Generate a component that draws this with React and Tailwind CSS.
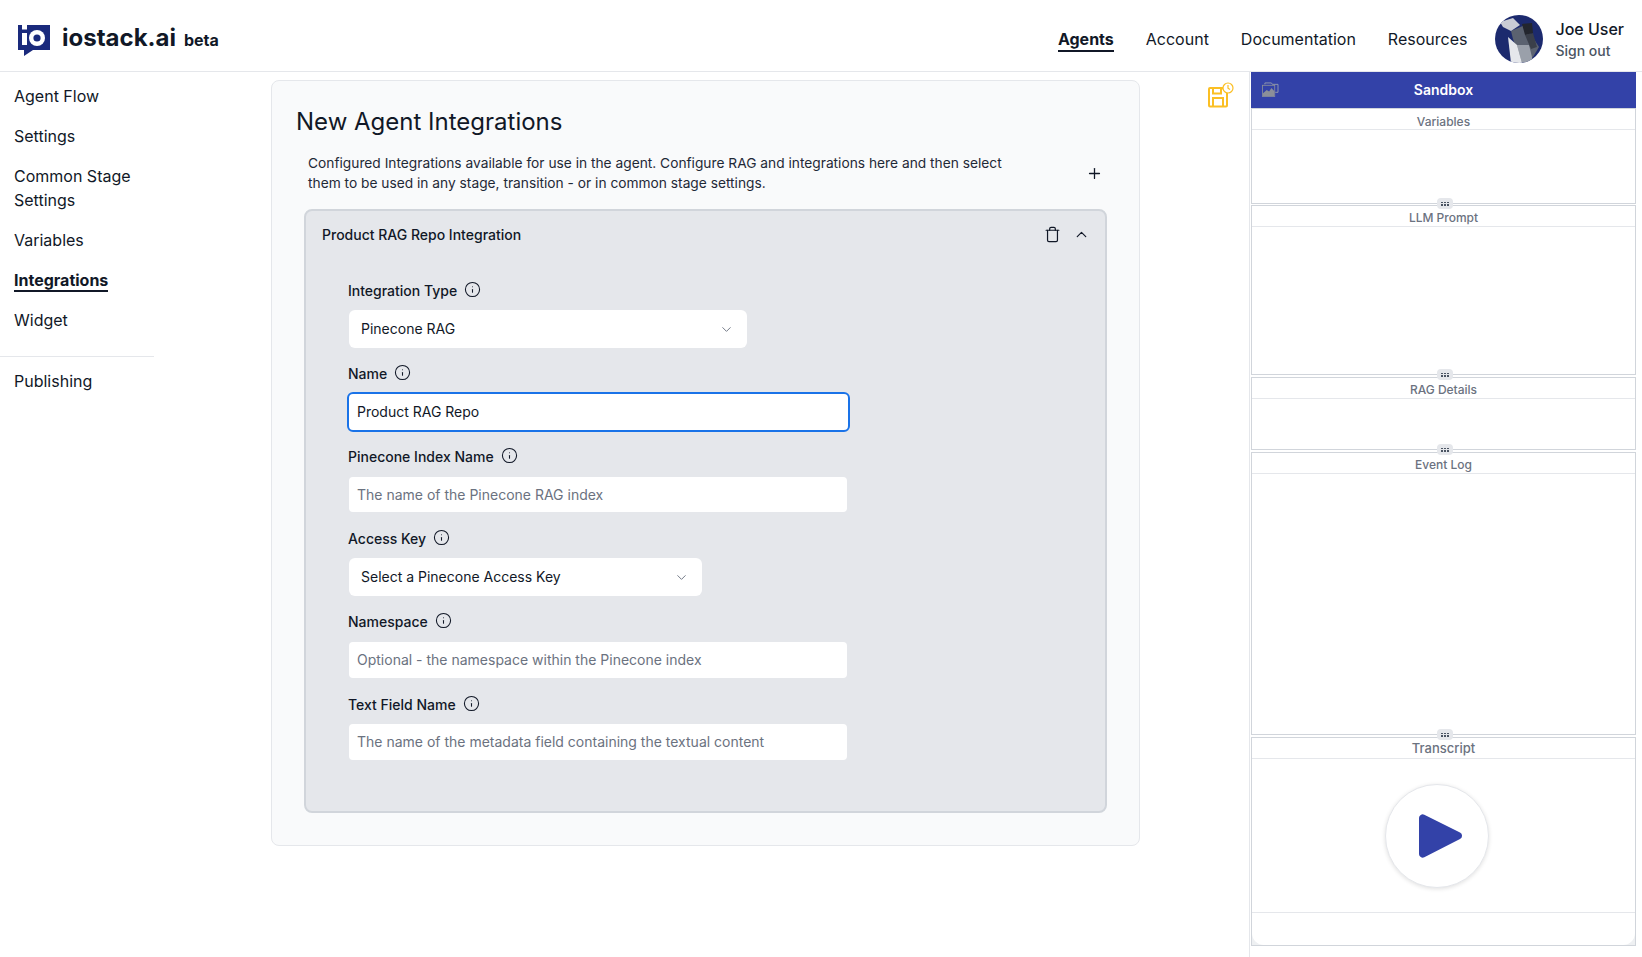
import React from "react";
import { ChevronDown, ChevronUp, Plus, Trash, Info } from "lucide-react";

function Logo() {
  return (
    <svg width="32" height="32" viewBox="0 0 32 32" className="shrink-0">
      <path d="M0 0H4V4H9V0H32V25H15L6 31V25H0Z" fill="#1a2a7c" />
      <rect x="4" y="0" width="5" height="4.5" fill="#fff" />
      <rect x="4" y="8" width="5" height="12" fill="#fff" />
      <circle cx="19" cy="13" r="8" fill="#fff" />
      <circle cx="19" cy="13" r="3.6" fill="#1a2a7c" />
    </svg>
  );
}

function Avatar() {
  return (
    <svg width="48" height="48" viewBox="0 0 48 48" className="shrink-0 rounded-full">
      <rect width="48" height="48" fill="#1c2a6e" />
      <path d="M16 16L30 10L44 32L38 42L26 47L18 24Z" fill="#5b6270" />
      <path d="M5 7L18 3L25 10L16 16L8 12Z" fill="#c9ccd4" />
      <path d="M22 30L34 30L38 46L27 48Z" fill="#9aa0aa" />
      <path d="M13 22L22 30L27 48H16Z" fill="#e5e7eb" />
      <path d="M30 20L38 18L42 32L36 34Z" fill="#3a3f4a" />
      <path d="M27 9L37 8L38 18L30 20Z" fill="#23262e" />
    </svg>
  );
}

function SaveIcon() {
  return (
    <svg width="26" height="26" viewBox="0 0 26 26" fill="none" stroke="#fbbf24" strokeWidth="2" className="shrink-0">
      <path d="M2 6H14.5L19 10.5V23.5a1 1 0 0 1-1 1H2a1 1 0 0 1-1-1V7a1 1 0 0 1 1-1Z" />
      <path d="M5 6V11.5H13V6" />
      <path d="M5 24.5V16H15V24.5" />
      <circle cx="20" cy="6" r="5" fill="#fff" strokeWidth="1.2" />
      <path d="M20 3V6.2L22 7.6" strokeWidth="1.2" />
    </svg>
  );
}

function GalleryIcon() {
  return (
    <svg width="17" height="15" viewBox="0 0 18 16" fill="none" className="shrink-0 -mt-[2px]">
      <path d="M3 2.5V1H10L11 2.5H17V11H14" stroke="#9ca3af" strokeWidth="0.9" />
      <rect x="0.5" y="3.5" width="13" height="12" stroke="#8b8f99" strokeWidth="0.9" />
      <path d="M1 15V12L5 8.5L7.5 10L10 6.5L13 9.5V15Z" fill="#8b8f99" />
    </svg>
  );
}

function Label({ children }) {
  return (
    <div className="flex items-center h-5 text-sm font-medium text-[#111827]">
      <span>{children}</span>
      <Info size={17} strokeWidth={1.5} className="ml-[7px] -mt-1 text-[#111827]" />
    </div>
  );
}

function SelectBox({ text, w }) {
  return (
    <div className={`${w} h-[38px] bg-white rounded-md flex items-center justify-between pl-3 pr-[13px] text-sm text-[#111827]`}>
      <span>{text}</span>
      <ChevronDown size={15} strokeWidth={1.5} className="text-[#6b7280]" />
    </div>
  );
}

function InputBox({ placeholder, h = "h-[35px]" }) {
  return (
    <div className={`w-[498px] ${h} bg-white rounded-[4px] flex items-center px-2 text-sm text-[#6b7280]`}>
      {placeholder}
    </div>
  );
}

function Handle() {
  return (
    <div className="flex justify-center h-0 relative z-10">
      <div className="w-4 h-[11px] -mt-[6px] ml-[3px] rounded bg-[#e5e7eb] flex items-center justify-center">
        <div className="grid grid-cols-3 gap-x-[1px] gap-y-[1px]">
          {[0, 1, 2, 3, 4, 5].map((i) => (
            <div key={i} className="w-[2px] h-[1.5px] bg-[#4b5563]" />
          ))}
        </div>
      </div>
    </div>
  );
}

function Pane({ title, h, mt = "mt-[2px]", children, inner = "", head = "pt-[2px]", size = "text-xs" }) {
  return (
    <div className={`${h} ${mt} border border-[#d1d5db] bg-[#eef0f2] box-border`}>
      <div className={`h-full bg-white flex flex-col overflow-hidden ${inner}`}>
        <div className={`h-[21px] ${head} ${size} shrink-0 border-b border-[#e5e7eb] flex items-center justify-center font-medium text-[#6b7280]`}>
          {title}
        </div>
        <div className="flex-1 flex flex-col min-h-0">{children}</div>
      </div>
    </div>
  );
}

export default function App() {
  const side = "text-base leading-6 text-[#111827]";
  return (
    <div className="h-screen w-full overflow-hidden bg-white font-['Inter',sans-serif] text-[#111827]">
      <header className="h-[72px] border-b border-[#e5e7eb] flex items-center pt-[6px] pr-[18px]">
        <div className="pl-[18px] flex items-center">
          <div className="mt-[4px]"><Logo /></div>
          <span className="ml-3 text-[24px] leading-8 font-bold -mt-[1px]">iostack.ai</span>
          <span className="ml-2 mt-[3px] text-base font-bold">beta</span>
        </div>
        <nav className="ml-auto flex items-center text-base">
          <span className="font-bold border-b-2 border-[#111827] leading-[21px] mt-[3px]">Agents</span>
          <span className="ml-8">Account</span>
          <span className="ml-8">Documentation</span>
          <span className="ml-8">Resources</span>
        </nav>
        <div className="ml-7 flex items-center">
          <Avatar />
          <div className="ml-3 flex flex-col">
            <span className="text-base font-medium leading-6">Joe User</span>
            <span className="text-sm text-[#4b5563] font-medium leading-5">Sign out</span>
          </div>
        </div>
      </header>
      <div className="flex h-[885px]">
        <aside className="w-[271px] shrink-0 pt-[12px]">
          <div className="pl-[14px] flex flex-col gap-4">
            <div className={side}>Agent Flow</div>
            <div className={side}>Settings</div>
            <div className={side}>Common Stage<br />Settings</div>
            <div className={side}>Variables</div>
            <div className={side}><span className="font-bold border-b-2 border-[#111827]">Integrations</span></div>
            <div className={side}>Widget</div>
          </div>
          <div className="w-[154px] mt-6 border-t border-[#e5e7eb]" />
          <div className={`${side} pl-[14px] mt-3`}>Publishing</div>
        </aside>
        <main className="w-[869px] shrink-0 pt-2">
          <div className="h-[766px] bg-[#f9fafb] border border-[#e5e7eb] rounded-lg pl-[32px] pr-[32px]">
            <h1 className="-ml-2 mt-[25px] text-[24px] leading-8 font-normal text-[#111827]">New Agent Integrations</h1>
            <div className="flex mt-[15px] ml-[4px]">
              <p className="w-[700px] text-[13.75px] leading-5 text-[#1f2937]">
                Configured Integrations available for use in the agent. Configure RAG and integrations here and then select them to be used in any stage, transition - or in common stage settings.
              </p>
              <Plus size={17} strokeWidth={1.8} className="ml-auto mr-[4px] mt-[12px]" />
            </div>
            <section className="mt-[16px] h-[604px] bg-[#e5e7eb] border-2 border-[#d1d5db] rounded-lg">
              <div className="flex items-center h-[47px] pl-[16px] pr-[15px]">
                <span className="text-sm font-medium">Product RAG Repo Integration</span>
                <Trash size={17} strokeWidth={1.7} className="ml-auto" />
                <ChevronUp size={17} strokeWidth={1.7} className="ml-3" />
              </div>
              <div className="pl-[42px] pt-[23px]">
                <Label>Integration Type</Label>
                <div className="mt-[9px] ml-[1px]"><SelectBox text="Pinecone RAG" w="w-[398px]" /></div>
                <div className="mt-4"><Label>Name</Label></div>
                <div className="mt-2 -ml-px w-[503px] h-10 bg-white border-2 border-[#1a73e8] rounded-md flex items-center pl-2 text-sm">Product RAG Repo</div>
                <div className="mt-[15px]"><Label>Pinecone Index Name</Label></div>
                <div className="mt-[10px] ml-[1px]"><InputBox placeholder="The name of the Pinecone RAG index" /></div>
                <div className="mt-[17px]"><Label>Access Key</Label></div>
                <div className="mt-[9px] ml-[1px]"><SelectBox text="Select a Pinecone Access Key" w="w-[353px]" /></div>
                <div className="mt-4"><Label>Namespace</Label></div>
                <div className="mt-[10px] ml-[1px]"><InputBox placeholder="Optional - the namespace within the Pinecone index" h="h-[36px]" /></div>
                <div className="mt-[17px]"><Label>Text Field Name</Label></div>
                <div className="mt-[9px] ml-[1px]"><InputBox placeholder="The name of the metadata field containing the textual content" h="h-[36px]" /></div>
              </div>
            </section>
          </div>
        </main>
        <div className="w-[109px] shrink-0 pl-[68px] pt-[10px]">
          <SaveIcon />
        </div>
        <div className="w-[393px] shrink-0 border-l border-[#e5e7eb] pl-px pr-[6px]">
          <div className="h-9 bg-[#3342a8] flex items-center pl-[11px]">
            <GalleryIcon />
            <span className="flex-1 text-center pr-[28px] text-sm font-semibold text-white">Sandbox</span>
          </div>
          <Pane title="Variables" h="h-[96px]" mt="mt-0" head="pt-[5px]" />
          <Handle />
          <Pane title="LLM Prompt" h="h-[170px]" mt="mt-px" head="pt-[3px]" />
          <Handle />
          <Pane title="RAG Details" h="h-[73px]" head="pt-[3px]" />
          <Handle />
          <Pane title="Event Log" h="h-[283px]" head="pt-[3px]" />
          <Handle />
          <Pane title="Transcript" h="h-[209px]" inner="rounded-b-xl" head="pt-px" size="text-[13px]">
            <div className="h-[154px] shrink-0 border-b border-[#e5e7eb] flex justify-center pt-[25px] pr-[14px]">
              <div className="w-[104px] h-[104px] rounded-full bg-white border border-[#e5e7eb] shadow-[0_1px_4px_rgba(0,0,0,0.12)] flex items-center justify-center">
                <svg width="46" height="46" viewBox="0 0 46 46" className="ml-[6px]">
                  <path d="M2 5a3.6 3.6 0 0 1 5.3-3.2L43 19.5a3.6 3.6 0 0 1 0 6.5L7.3 44.2A3.6 3.6 0 0 1 2 41Z" fill="#3342a8" />
                </svg>
              </div>
            </div>
          </Pane>
        </div>
      </div>
    </div>
  );
}
